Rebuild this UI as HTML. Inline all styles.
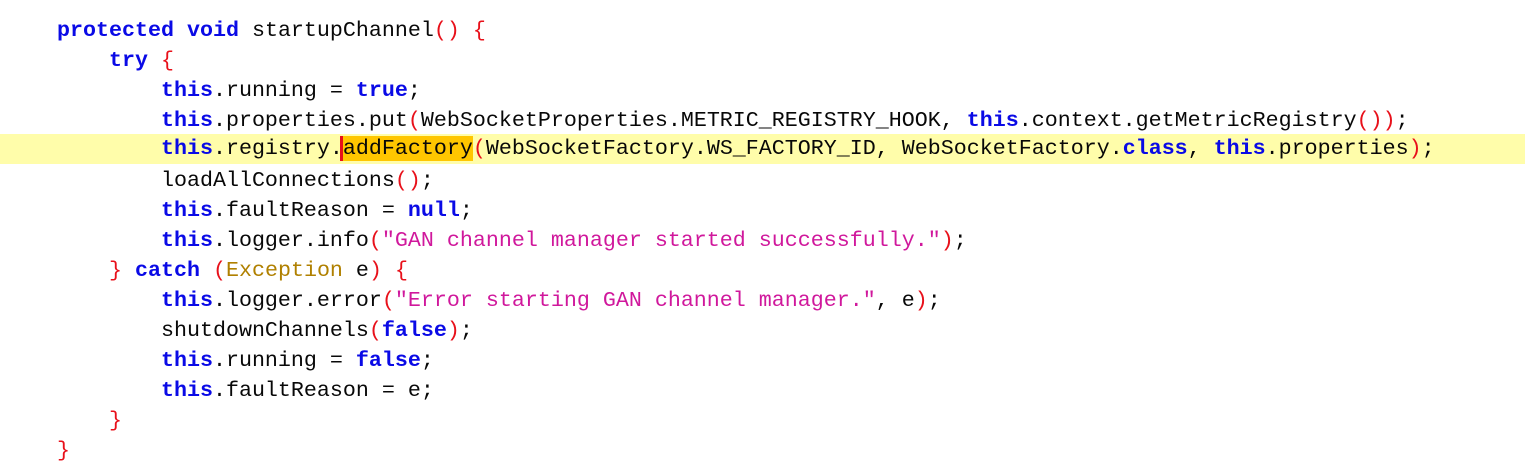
<!DOCTYPE html><html><head><style>
body{margin:0;width:1525px;height:474px;background:#fff;overflow:hidden;font-family:"Liberation Mono",monospace;font-size:21.67px;color:#080808}
.l{position:absolute;left:57px;height:30px;line-height:30px;white-space:pre;padding-top:2px}
.k{color:#0a0ae6;font-weight:bold}.b{color:#e8101a}.s{color:#d0189c}.t{color:#b08000}
.hl{position:absolute;left:0;width:1525px;top:134px;height:30px;background:#fffdaa}
.m{background:#ffc600;border-left:3px solid #e8101a;margin-left:-3px}
</style></head><body>
<div class="hl"></div>
<div class="l" style="top:14px"><span class="k">protected void</span> startupChannel<span class="b">()</span> <span class="b">{</span></div>
<div class="l" style="top:44px">    <span class="k">try</span> <span class="b">{</span></div>
<div class="l" style="top:74px">        <span class="k">this</span>.running = <span class="k">true</span>;</div>
<div class="l" style="top:104px">        <span class="k">this</span>.properties.put<span class="b">(</span>WebSocketProperties.METRIC_REGISTRY_HOOK, <span class="k">this</span>.context.getMetricRegistry<span class="b">())</span>;</div>
<div class="l" style="top:132px">        <span class="k">this</span>.registry.<span class="m">addFactory</span><span class="b">(</span>WebSocketFactory.WS_FACTORY_ID, WebSocketFactory.<span class="k">class</span>, <span class="k">this</span>.properties<span class="b">)</span>;</div>
<div class="l" style="top:164px">        loadAllConnections<span class="b">()</span>;</div>
<div class="l" style="top:194px">        <span class="k">this</span>.faultReason = <span class="k">null</span>;</div>
<div class="l" style="top:224px">        <span class="k">this</span>.logger.info<span class="b">(</span><span class="s">"GAN channel manager started successfully."</span><span class="b">)</span>;</div>
<div class="l" style="top:254px">    <span class="b">}</span> <span class="k">catch</span> <span class="b">(</span><span class="t">Exception</span> e<span class="b">)</span> <span class="b">{</span></div>
<div class="l" style="top:284px">        <span class="k">this</span>.logger.error<span class="b">(</span><span class="s">"Error starting GAN channel manager."</span>, e<span class="b">)</span>;</div>
<div class="l" style="top:314px">        shutdownChannels<span class="b">(</span><span class="k">false</span><span class="b">)</span>;</div>
<div class="l" style="top:344px">        <span class="k">this</span>.running = <span class="k">false</span>;</div>
<div class="l" style="top:374px">        <span class="k">this</span>.faultReason = e;</div>
<div class="l" style="top:404px">    <span class="b">}</span></div>
<div class="l" style="top:434px"><span class="b">}</span></div>
</body></html>
